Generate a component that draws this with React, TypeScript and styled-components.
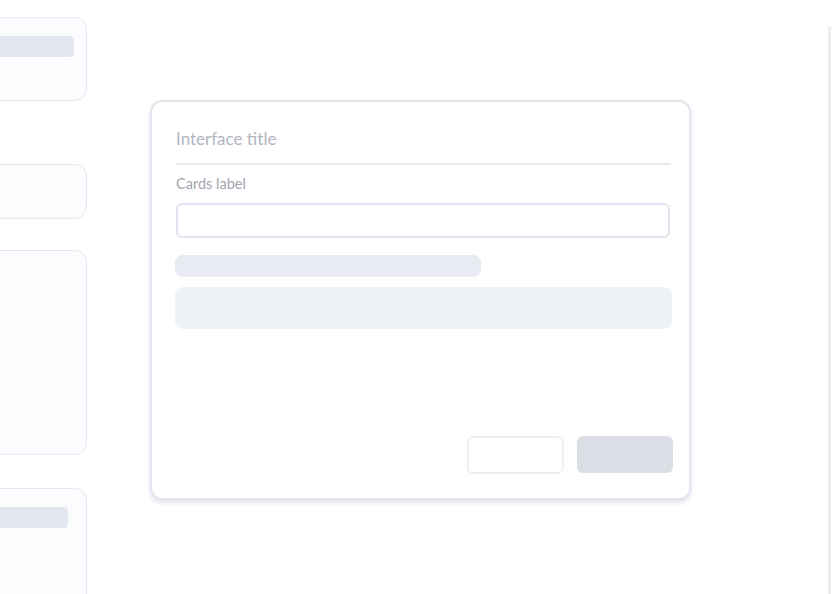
import React from "react";
import styled, { createGlobalStyle } from "styled-components";

const Global = createGlobalStyle`
  html, body { margin: 0; padding: 0; background: #ffffff; }
  body { font-family: "Lato", "Noto Sans", sans-serif; overflow: hidden; }
  #root { width: 840px; height: 594px; }
`;

const Page = styled.div`
  display: flex;
  width: 840px;
  height: 594px;
  overflow: hidden;
  background: #ffffff;
`;

const SideColumn = styled.div`
  display: flex;
  flex-direction: column;
  width: 147px;
  margin-left: -60px;
  flex-shrink: 0;
`;

const SideCard = styled.div<{ $top: number; $height: number }>`
  margin-top: ${(p) => p.$top}px;
  height: ${(p) => p.$height}px;
  flex-shrink: 0;
  box-sizing: border-box;
  border: 1px solid #e3e6f0;
  border-radius: 12px;
  background: #fcfcfe;
  padding: 18px 0 0 0;
`;

const SideBar = styled.div<{ $width: number }>`
  width: ${(p) => p.$width}px;
  height: 21px;
  border-radius: 4px;
  background: #e3e8f0;
`;

const Stage = styled.div`
  flex: 1;
  display: flex;
  align-items: flex-start;
  padding: 100px 0 0 63px;
`;

const Dialog = styled.div`
  width: 541px;
  height: 400px;
  box-sizing: border-box;
  border: 2px solid #e4e5ef;
  border-radius: 12px;
  background: #ffffff;
  box-shadow: 0 3px 4px rgba(200, 202, 222, 0.55);
  padding: 25px 18px 24px 24px;
  display: flex;
  flex-direction: column;
`;

const Title = styled.div`
  font-size: 17px;
  line-height: 24px;
  color: #b3b5c2;
  padding-bottom: 12px;
  border-bottom: 2px solid #e6e7ef;
`;

const Label = styled.div`
  font-size: 14.5px;
  line-height: 18px;
  color: #a2a4b0;
  margin-top: 10px;
`;

const Input = styled.div`
  margin-top: 10px;
  height: 35px;
  width: 494px;
  box-sizing: border-box;
  border: 2px solid #e3e4ef;
  border-radius: 6px;
  background: #ffffff;
`;

const Skeleton = styled.div<{ $width: number; $height: number; $top: number; $color: string }>`
  width: ${(p) => p.$width}px;
  height: ${(p) => p.$height}px;
  margin-top: ${(p) => p.$top}px;
  margin-left: -1px;
  border-radius: 8px;
  background: ${(p) => p.$color};
`;

const Footer = styled.div`
  margin-top: auto;
  display: flex;
  justify-content: flex-end;
  gap: 13px;
  margin-right: -2px;
`;

const GhostButton = styled.div`
  width: 97px;
  height: 38px;
  box-sizing: border-box;
  border: 2px solid #eef0f5;
  border-radius: 6px;
  background: #ffffff;
`;

const SolidButton = styled.div`
  width: 96px;
  height: 37px;
  border-radius: 6px;
  background: #dcdee6;
`;

const RightRail = styled.div`
  width: 3px;
  margin: 26px 9px 0 0;
  background: #eef0f0;
  flex-shrink: 0;
`;

export default function App() {
  return (
    <>
      <Global />
      <Page>
        <SideColumn>
          <SideCard $top={17} $height={84}>
            <SideBar $width={133} />
          </SideCard>
          <SideCard $top={63} $height={55} />
          <SideCard $top={31} $height={205} />
          <SideCard $top={33} $height={140}>
            <SideBar $width={127} />
          </SideCard>
        </SideColumn>
        <Stage>
          <Dialog>
            <Title>Interface title</Title>
            <Label>Cards label</Label>
            <Input />
            <Skeleton $width={306} $height={22} $top={17} $color="#e8ebf2" />
            <Skeleton $width={497} $height={42} $top={10} $color="#eef1f6" />
            <Footer>
              <GhostButton />
              <SolidButton />
            </Footer>
          </Dialog>
        </Stage>
        <RightRail />
      </Page>
    </>
  );
}
